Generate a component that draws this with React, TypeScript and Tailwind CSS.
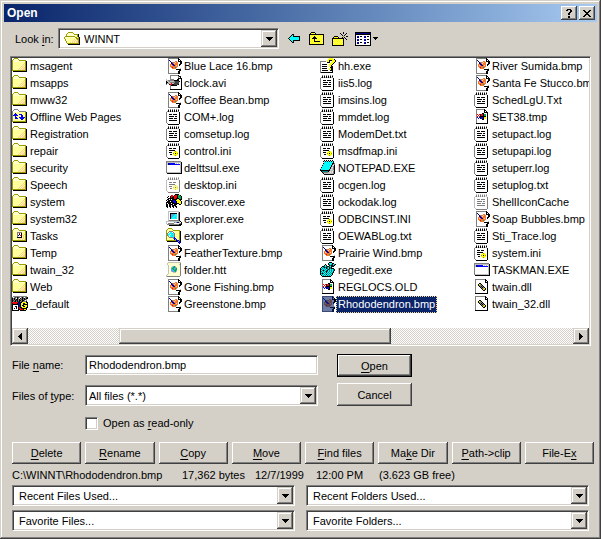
import type { ReactNode } from "react";

const PALETTE: Record<string, string> = {
  k: "#000000",
  w: "#ffffff",
  g: "#808080",
  s: "#c0c0c0",
  l: "#e4e4e0",
  y: "#ffff9c",
  i: "#ffffce",
  z: "#ffff63",
  Y: "#ffff00",
  o: "#9c9c00",
  p: "#ffce9c",
  r: "#ff0000",
  b: "#0000ff",
  n: "#000084",
  c: "#00ffff",
  t: "#008484",
  O: "#f07830",
  G: "#00b050",
  d: "#404040",
  B: "#5aa5e0",
};

const FOLDER = [
  "..oooo..........",
  ".oiiiio.........",
  "oiiiiiiooooooo..",
  "oiiiiiiiiiiiiok.",
  "oiyyyyyyyyyyyok.",
  "oiyyyyyyyyyypok.",
  "oiyyyyyyyyypyok.",
  "oiyyyyyyyypypok.",
  "oiyyyyyyypypyok.",
  "oiyyyyyypypypok.",
  "oiyyyyypypyppok.",
  "oiyyyypypypppok.",
  "ooooooooooooook.",
  ".kkkkkkkkkkkkkk.",
];

const ICONS: Record<string, string[]> = {
  folder: FOLDER,
  offline: [
    "..gggg..........",
    ".gwwwwg.........",
    "gwwwwwwggggggg..",
    "gwyyyyyyyyyyyok.",
    "gyybyyyyyyyyyok.",
    "gybbbyybbbyyyok.",
    "gbbbbbyyybbyyok.",
    "gyybyyyyybbyyok.",
    "gyybbyybbbbbbok.",
    "gyybbbyybbbbyok.",
    "gyyyyyyyybbyyok.",
    "gyyyyyyyyyyyyok.",
    "ooooooooooooook.",
    ".kkkkkkkkkkkkkk.",
  ],
  tasks: [
    "..oooo..........",
    ".oiiiio.........",
    "oiiiiiiooooooo..",
    "oiiiiiiiiiiiiok.",
    "oiyyygggggyyyok.",
    "oiyyygwrwkyyyok.",
    "oiyyygwkwkyypok.",
    "oiyyygbwrkypyok.",
    "oiyyygwwwkypyok.",
    "oiyyykkkkkypyok.",
    "oiyyyyypypypyok.",
    "oiyyyypypypypok.",
    "ooooooooooooook.",
    ".kkkkkkkkkkkkkk.",
  ],
  open: [
    "....ooooo.......",
    "...oiiiiio......",
    "..oiiiiiiiooook.",
    "..oiiiiiiiiiiok.",
    ".ooooooooooyiok.",
    "oiiiiiiiiiiooyok",
    "oiiyyyyyyyyyoook",
    ".oiyyyyyyypypook",
    ".oiyyyyyypypypok",
    "..oyyyyypypyppok",
    "..oyyypypypyppok",
    "...ooooooooooook",
    "....kkkkkkkkkkkk",
  ],
  batch: [
    ".gggggggggggggg.",
    "gwgdgkdgwgkgwgdk",
    "kgkgwkgwkgkdkgkk",
    "kgkgkkgkgdkgkdg.",
    "kdgkdkgkkgkkgwg.",
    "kgdkgkdkgdkgggk.",
    "rrrrrrnnnkYYYYkk",
    "krrrrknnkYYkkYYk",
    "kkkkkkkbnYYkkkkk",
    "kwwwwwkbkYkkYYYk",
    "kwwkkwkbnYYkkYYk",
    "kwwwkwkrkkYYYYkk",
    "kwkwkwkrrnkkkkk.",
    "kwwwwwkkrrrkYYk.",
    "kkkkkkk.kkkkkk..",
  ],
  bmp: [
    "..ggggggggggk...",
    "..gwwwwwwwwwkk..",
    "..gnwwwwwwwwkwk.",
    "..gwnwwwwOOwkkkk",
    "..gwwngOOpOOwwkk",
    "..gwwnbOpOOOwwkk",
    "..gwOOnnOOOOwkk.",
    "..gwOpObnOpOwk..",
    "..gwOOOOOOOOww..",
    "..gwwOrOOGOwww..",
    "..gwwwOOOOwwwws.",
    "..gwwwwwwwkkkkk.",
    "..gwwwwwwwwwwkk.",
    "..gwwwwwwwwwkk..",
    "..gwwwwwwwwwkk..",
    "..ggggggggggkk..",
  ],
  avi: [
    "....ggggggggk...",
    "....gwwwwwwwgkk.",
    "....gwwwwwwwgwk.",
    "....gwwwwwwwkkkk",
    "s...ggggwwwkkwwk",
    "ssggggggkkkkkwwk",
    "kssgssssgddddkwk",
    "kkssgggggddddwwk",
    "ksgssrssdddddwwk",
    "g..krrkkddddkwwk",
    "....gkkkkkkwwwwk",
    "....gwwwwwwwwwwk",
    "....gwwwwwwwwwwk",
    "....gwwwwwwwwwwk",
    "....kkkkkkkkkkkk",
  ],
  log: [
    "..g.g.g.g.g.g...",
    "..kwkwkwkwkwk...",
    ".gksksksksksg...",
    "gwwwwwwwwwwwwk..",
    "gwwwwwwwwwwwwk..",
    "gwwkkkwkkkkwwk..",
    "gwwwwwwwwwwwwk..",
    "gwwkkkkkwkkwwk..",
    "gwwwwwwwwwwwwk..",
    "gwwkkkkwkkkwwk..",
    "gwwwwwwwwwwwwk..",
    "gwwkkkkkkkkwwk..",
    "gwwwwwwwwwwwwk..",
    "gwwwwwwwwwwwwk..",
    ".gwwwwwwwwwwwk..",
    "..kkkkkkkkkkk...",
  ],
  ini: [
    "..g.g.g.g.g.g...",
    "..kwkwkwkwkwk...",
    ".gksksksksksg...",
    "gwwwwwwwwwwwwk..",
    "gwwwwwwwwwwwwk..",
    "gwwkkkwkkkwwwk..",
    "gwwwwwwwwwwwwk..",
    "gwwkkkkkkwwwwk..",
    "gwwwwwwwYoYwwk..",
    "gwwkkkwYYYYYwk..",
    "gwwwwwwoYkYowk..",
    "gwwwkkwYYYYYwk..",
    "gwwwwwwwYoYwwk..",
    "gwwwwwwwwwwwwk..",
    ".gwwwwwwwwwwwk..",
    "..kkkkkkkkkkk...",
  ],
  exe: [
    "................",
    "ggggggggggggggg.",
    "gssssssssssssssk",
    "gsnbbbbbbwswswsk",
    "gsnnbbbbbbbbbbsk",
    "gwwwwwwwwwwwwwsk",
    "gwwwwwwwwwwwwwsk",
    "gwwwwwwwwwwwwwsk",
    "gwwwwwwwwwwwwwsk",
    "gwwwwwwwwwwwwwsk",
    "gwwwwwwwwwwwwwsk",
    "gwwwwwwwwwwwwwsk",
    "gssssssssssssssk",
    ".kkkkkkkkkkkkkkk",
  ],
  discover: [
    ".........kkkk...",
    ".....rr.krrkGGk.",
    "..k.krrkrrrkGGGk",
    ".k..krkkrrrkGGGk",
    "..kkkkkkrrkkkGGk",
    ".kk.kwkkkkkYYkkk",
    "k.kkkkkbbkYYYYk.",
    ".kkkwkkbbbkYYYYk",
    "kkkkkkkkbbkYYYYk",
    "kwkkkwkkkkkkkYYk",
    "kk.kkkkwkkk..kk.",
    "kk.kk.kkkk......",
    "kk.kk.kk.kk.....",
    ".k..k..k..k.....",
  ],
  computer: [
    "..sssssssssss...",
    "..swwwwwwwwwsk..",
    "..swkkkkkkkwgk..",
    "..swkBBBBccwgk..",
    "..swkBBBcccwgk..",
    "..swkBBccccwgk..",
    "..swkBcccBcwgk..",
    "..swkccccccwgk..",
    "..swwwwwwwwwgk..",
    "..sggggggggggk..",
    "ssssssssssssssk.",
    "swwwwwwwgsgnnswk",
    "swggggggwwwwwsgk",
    ".ggggggggggggkkk",
    "...kkkkkkkkkkkk.",
  ],
  search: [
    "..oooo..........",
    ".oyyyyo.........",
    "oyyyyyyooooooo..",
    "oiyggggiyyyyyok.",
    "oigwccwgiyyyyok.",
    "ogwcccBcgyyyyok.",
    "ogccwcccgyyyyok.",
    "ogcwccBcgyyyyok.",
    "oigwccccgyyyyok.",
    "oiyggggBbyyyyok.",
    "oiyyyyygbbyyyok.",
    "oiyyyyyynBbyyok.",
    "oooooooooonbbok.",
    ".kkkkkkkkkknBbk.",
    "............nbn.",
    ".............n..",
  ],
  htt: [
    "..sssssssssssss.",
    ".syyiiiiiiiiiyg.",
    ".siiiiiiiiiiisg.",
    "..siiiiiiiiiiig.",
    "..siiisBGsiiiig.",
    "..siisBGGBsiiig.",
    "..siiBGGBBGiiig.",
    "..siiBBGBGGiiig.",
    "..siiBBBGGBiiig.",
    "..siisBBBGsiiig.",
    "..siiiisssiiiig.",
    "..siiiiiiiiiiig.",
    ".siiiiiiiiiiiig.",
    "syiiiiiiiiiiiig.",
    "sggggggggggggg..",
  ],
  help: [
    ".........YYYY...",
    "........YYYYYYk.",
    ".......YYkkkYYYk",
    "ggggggwYYk..YYYk",
    "gwwwwwwkkk.YYYk.",
    "gwwwwwwww.YYYk..",
    "gwkkkkkwwYYYk...",
    "gwwwwwwwwYYk....",
    "gwkkkkkwwYYkk...",
    "gwwwwwwwwwkkk...",
    "gwkkkkkwwYYkk...",
    "gwwwwwwwwYYkk...",
    "gwkkkkkkwwkkk...",
    "gwwwwwwwwwwwk...",
    "gkkkkkkkkkkkk...",
  ],
  notepad: [
    "....k.k.k.k.k...",
    "...kckckckckck..",
    "....ccccccccck..",
    "...kcccccccckkg.",
    "...cccccccccksg.",
    "..kcccccccckslk.",
    "..cccccccccksgk.",
    ".kcccccccckslgk.",
    ".ccccccccckssgk.",
    "kcccccccckslsgk.",
    "kkkkkkkkkkssssk.",
    ".kttttttkslslgk.",
    "..kgggggsslslgk.",
    "...ksssssssssgk.",
    "....kkkkkkkkkk..",
  ],
  regedit: [
    ".........kkk....",
    "........kccckk..",
    ".....k..ktctkctk",
    "....kck..ktkktk.",
    "..kktctkktckkk..",
    ".kctktktcktk....",
    "kctctcktcktkkk..",
    "ktctctctktctctk.",
    "kctktctkctctctk.",
    "ktctctktctctck..",
    "kctctckctctctk..",
    "ktktctctctctk...",
    "kctctckctctck...",
    ".kctctctctck....",
    "..kkkkkkkkk.....",
  ],
  windoc: [
    "..ggggggggk.....",
    "..gwwwwwwwkk....",
    "..gwwwwwwwkwk...",
    "..gwwwwwwwkkkk..",
    "..gwwwwwkkwwwk..",
    "..grwrkrrkGGwk..",
    "..gwrwkrrkGGwk..",
    "..grwrkkkkkkwk..",
    "..gbwbkbbkYYwk..",
    "..gwbwkbbkYYwk..",
    "..gwwwwwkkwwwk..",
    "..gwwwwwwwwwwk..",
    "..gwwwwwwwwwwk..",
    "..gwwwwwwwwwwk..",
    "..kkkkkkkkkkkk..",
  ],
  dll: [
    ".ggggggggggk....",
    ".gwwwwwwwwwkk...",
    ".gwwwwwwwwwkwk..",
    ".gwwwwwwwwwkkk..",
    ".gwwwkkwwwwwwk..",
    ".gwwkYokwwwwwk..",
    ".gwwkoggkwwwwk..",
    ".gwwwkgkgkwwwk..",
    ".gwwwwkgkgkwwk..",
    ".gwwwwwkgoYkwk..",
    ".gwwwwwwkYokwk..",
    ".gwwwwwwwkkwwk..",
    ".gwwwwwwwwwwwk..",
    ".gwwwwwwwwwwwk..",
    ".kkkkkkkkkkkkk..",
  ],
  back: [
    "....kk......",
    "...kck......",
    "..kcckkkkkkk",
    ".kccccccccck",
    "kcccccccccck",
    ".kccccccccck",
    "..kcckkkkkkk",
    "...kck......",
    "....kk......",
  ],
  up: [
    "..kkkk.........",
    ".kYzYzk........",
    "kkkkkkkkkkkkkkk",
    "kYzYzYzYzYzYzYk",
    "kzYzYkYzYzYzYzk",
    "kYzYkkkYzYzYzYk",
    "kzYkkkkkYzYzYzk",
    "kYzYzkzYzYzYzYk",
    "kzYzYkYzYzYzYzk",
    "kYzYzkkkkkkYzYk",
    "kzYzYzYzYzYzYzk",
    "kYzYzYzYzYzYzYk",
    "kkkkkkkkkkkkkkk",
  ],
  create: [
    "...........k....",
    "........k..k..k.",
    ".........k...k..",
    "..........k.k...",
    "..kkkk.....o..kk",
    ".kYYYYk...k.k...",
    "kkkkkkkkkkkk.k..",
    "kYzYzYzYzYzk..k.",
    "kzYzYzYzYzYk....",
    "kYzYzYzYzYzk....",
    "kzYzYzYzYzYk....",
    "kYzYzYzYzYzk....",
    "kzYzYzYzYzYk....",
    "kkkkkkkkkkkk....",
  ],
  views: [
    "kkkkkkkkkkkkkkkk",
    "knnnnnnnnnnnnnnk",
    "kkkkkkkkkkkkkkkk",
    "kwwwwwwwwwwwwwwk",
    "kwbnwkkwwbnwkkwk",
    "kwnnwwwwwnnwwwwk",
    "kwwwwwwwwwwwwwwk",
    "kwbnwkkwwbnwkkwk",
    "kwnnwwwwwnnwwwwk",
    "kwwwwwwwwwwwwwwk",
    "kwbnwkkwwbnwkkwk",
    "kwnnwwwwwnnwwwwk",
    "kwwwwwwwwwwwwwwk",
    "kkkkkkkkkkkkkkkk",
  ],
  down: ["kkkkkkk", ".kkkkk.", "..kkk..", "...k..."],
  caret: ["kkkkk", ".kkk.", "..k.."],
  left: ["...k", "..kk", ".kkk", "kkkk", ".kkk", "..kk", "...k"],
  right: ["k...", "kk..", "kkk.", "kkkk", "kkk.", "kk..", "k..."],
  close: ["kk....kk", ".kk..kk.", "..kkkk..", "...kk...", "..kkkk..", ".kk..kk.", "kk....kk"],
  question: [".kkkk.", "kk..kk", "....kk", "...kk.", "..kk..", "..kk..", "......", "..kk..", "..kk.."],
};

function Pixels({ name, className = "" }: { name: string; className?: string }) {
  const rows = ICONS[name];
  const width = Math.max(...rows.map((r) => r.length));
  const rects: ReactNode[] = [];
  rows.forEach((row, y) => {
    let x = 0;
    while (x < row.length) {
      let end = x + 1;
      while (end < row.length && row[end] === row[x]) end++;
      const fill = PALETTE[row[x]];
      if (fill) rects.push(<rect key={`${x}-${y}`} x={x} y={y} width={end - x} height={1} fill={fill} />);
      x = end;
    }
  });
  return (
    <svg
      aria-hidden="true"
      width={width}
      height={rows.length}
      viewBox={`0 0 ${width} ${rows.length}`}
      shapeRendering="crispEdges"
      className={`block shrink-0 ${className}`}
    >
      {rects}
    </svg>
  );
}

const RAISED =
  "bg-[#d4d0c8] shadow-[inset_-1px_-1px_0_#404040,inset_1px_1px_0_#fff,inset_-2px_-2px_0_#808080]";
const THUMB =
  "bg-[#d4d0c8] shadow-[inset_-1px_-1px_0_#404040,inset_1px_1px_0_#d4d0c8,inset_-2px_-2px_0_#808080,inset_2px_2px_0_#fff]";
const SUNKEN =
  "border border-t-[#808080] border-l-[#808080] border-r-white border-b-white bg-white shadow-[inset_1px_1px_0_#404040,inset_-1px_-1px_0_#d4d0c8]";

type Entry = { icon: string; name: string; selected?: boolean; faded?: boolean };

const e = (icon: string, name: string, extra: Partial<Entry> = {}): Entry => ({ icon, name, ...extra });

const COLUMNS: Entry[][] = [
  [
    e("folder", "msagent"),
    e("folder", "msapps"),
    e("folder", "mww32"),
    e("offline", "Offline Web Pages"),
    e("folder", "Registration"),
    e("folder", "repair"),
    e("folder", "security"),
    e("folder", "Speech"),
    e("folder", "system"),
    e("folder", "system32"),
    e("tasks", "Tasks"),
    e("folder", "Temp"),
    e("folder", "twain_32"),
    e("folder", "Web"),
    e("batch", "_default"),
  ],
  [
    e("bmp", "Blue Lace 16.bmp"),
    e("avi", "clock.avi"),
    e("bmp", "Coffee Bean.bmp"),
    e("log", "COM+.log"),
    e("log", "comsetup.log"),
    e("ini", "control.ini"),
    e("exe", "delttsul.exe"),
    e("ini", "desktop.ini", { faded: true }),
    e("discover", "discover.exe"),
    e("computer", "explorer.exe"),
    e("search", "explorer"),
    e("bmp", "FeatherTexture.bmp"),
    e("htt", "folder.htt"),
    e("bmp", "Gone Fishing.bmp"),
    e("bmp", "Greenstone.bmp"),
  ],
  [
    e("help", "hh.exe"),
    e("log", "iis5.log"),
    e("log", "imsins.log"),
    e("log", "mmdet.log"),
    e("log", "ModemDet.txt"),
    e("ini", "msdfmap.ini"),
    e("notepad", "NOTEPAD.EXE"),
    e("log", "ocgen.log"),
    e("log", "ockodak.log"),
    e("ini", "ODBCINST.INI"),
    e("log", "OEWABLog.txt"),
    e("bmp", "Prairie Wind.bmp"),
    e("regedit", "regedit.exe"),
    e("windoc", "REGLOCS.OLD"),
    e("bmp", "Rhododendron.bmp", { selected: true }),
  ],
  [
    e("bmp", "River Sumida.bmp"),
    e("bmp", "Santa Fe Stucco.bmp"),
    e("log", "SchedLgU.Txt"),
    e("windoc", "SET38.tmp"),
    e("log", "setupact.log"),
    e("log", "setupapi.log"),
    e("log", "setuperr.log"),
    e("log", "setuplog.txt"),
    e("log", "ShellIconCache", { faded: true }),
    e("bmp", "Soap Bubbles.bmp"),
    e("log", "Sti_Trace.log"),
    e("ini", "system.ini"),
    e("exe", "TASKMAN.EXE"),
    e("dll", "twain.dll"),
    e("dll", "twain_32.dll"),
  ],
];

function FileRow({ entry }: { entry: Entry }) {
  return (
    <li role="option" aria-selected={!!entry.selected} className="flex h-[17px] whitespace-nowrap">
      <span className={`relative h-4 w-4 shrink-0 ${entry.faded ? "opacity-50" : ""}`}>
        <Pixels name={entry.icon} />
        {entry.selected && <span className="absolute inset-y-0 right-0.5 left-0.5 bg-[#0a246a]/60" />}
      </span>
      <span
        className={`border border-dotted px-px leading-[15px] ${
          entry.selected ? "border-[#f5db95] bg-[#0a246a] text-white" : "border-transparent"
        }`}
      >
        {entry.name}
      </span>
    </li>
  );
}

function Combo({ id, label, value, className = "" }: { id: string; label?: string; value: string; className?: string }) {
  return (
    <div className={`relative h-[21px] ${SUNKEN} ${className}`}>
      <select
        id={id}
        aria-label={label}
        className="block h-full w-full appearance-none bg-transparent pr-5 outline-none"
      >
        <option>{value}</option>
      </select>
      <span
        className={`pointer-events-none absolute top-px right-px bottom-px flex w-4 items-center justify-center ${THUMB}`}
      >
        <Pixels name="down" />
      </span>
    </div>
  );
}

function Key({ text, at }: { text: string; at: number }) {
  return (
    <span>
      {text.slice(0, at)}
      <u className="underline-offset-2">{text[at]}</u>
      {text.slice(at + 1)}
    </span>
  );
}

const COMMANDS: [string, number][] = [
  ["Delete", 0],
  ["Rename", 0],
  ["Copy", 0],
  ["Move", 0],
  ["Find files", 0],
  ["Make Dir", 2],
  ["Path->clip", 0],
  ["File-Ex", 6],
];

const TRACK = "bg-[repeating-conic-gradient(#fff_0_25%,#d4d0c8_0_50%)] bg-size-[2px_2px]";

export default function App() {
  return (
    <main className="min-h-screen bg-[#d4d0c8] p-1 font-['Liberation_Sans',Arial,sans-serif] text-[11px] leading-[14px] text-black shadow-[inset_-1px_-1px_0_#404040,inset_1px_1px_0_#d4d0c8,inset_-2px_-2px_0_#808080,inset_2px_2px_0_#fff]">
      <header className="flex h-[18px] items-center bg-linear-to-r from-[#0a246a] to-[#a6caf0] pr-0.5 pl-[3px]">
        <h1 className="flex-1 text-xs font-bold text-white">Open</h1>
        <button aria-label="Help" className={`mr-0.5 flex h-3.5 w-4 items-center justify-center ${RAISED}`}>
          <Pixels name="question" />
        </button>
        <button aria-label="Close" className={`flex h-3.5 w-4 items-center justify-center ${RAISED}`}>
          <Pixels name="close" />
        </button>
      </header>

      <div className="flex items-center pt-1.5 pl-[11px]">
        <label htmlFor="look-in" className="w-[43px]">
          <Key text="Look in:" at={5} />
        </label>
        <div className="relative w-[221px]">
          <Combo id="look-in" value="WINNT" className="pl-[25px]" />
          <Pixels name="open" className="pointer-events-none absolute top-1 left-1.5" />
        </div>
        <button aria-label="Back" className="ml-[9px]">
          <Pixels name="back" />
        </button>
        <button aria-label="Up one level" className="ml-[9px]">
          <Pixels name="up" />
        </button>
        <button aria-label="Create new folder" className="ml-2">
          <Pixels name="create" />
        </button>
        <button aria-label="View menu" className="ml-[7px] flex items-center gap-0.5">
          <Pixels name="views" />
          <Pixels name="caret" />
        </button>
      </div>

      <section className={`mt-[7px] mr-1.5 ml-1.5 p-px ${SUNKEN}`}>
        <ul
          role="listbox"
          aria-label="Files"
          className="grid h-[270px] grid-cols-[154px_154px_154px_minmax(0,1fr)] overflow-hidden"
        >
          {COLUMNS.map((column, i) => (
            <li key={i} role="presentation">
              <ul role="group">
                {column.map((entry) => (
                  <FileRow key={entry.name} entry={entry} />
                ))}
              </ul>
            </li>
          ))}
        </ul>
        <div className="flex h-4">
          <button aria-label="Scroll left" className={`flex w-4 items-center justify-center ${THUMB}`}>
            <Pixels name="left" />
          </button>
          <div className={`flex flex-1 ${TRACK}`}>
            <div className="w-1/6" />
            <div className={`w-1/2 ${THUMB}`} />
          </div>
          <button aria-label="Scroll right" className={`flex w-4 items-center justify-center ${THUMB}`}>
            <Pixels name="right" />
          </button>
        </div>
      </section>

      <form className="pr-[3px] pl-2" onSubmit={(event) => event.preventDefault()}>
        <div className="flex pt-2">
          <div className="w-[306px] pt-px">
            <div className="flex items-center">
              <label htmlFor="file-name" className="w-[73px]">
                <Key text="File name:" at={5} />
              </label>
              <input
                id="file-name"
                defaultValue="Rhododendron.bmp"
                className={`h-5 w-[233px] px-[3px] outline-none ${SUNKEN}`}
              />
            </div>
            <div className="mt-2.5 flex items-center">
              <label htmlFor="file-type" className="w-[73px]">
                <Key text="Files of type:" at={9} />
              </label>
              <Combo id="file-type" value="All files (*.*)" className="w-[233px] pl-[3px]" />
            </div>
          </div>
          <div className="ml-[19px] flex w-[75px] flex-col gap-1.5">
            <button
              type="submit"
              className="h-[23px] border border-black bg-[#d4d0c8] shadow-[inset_-1px_-1px_0_#404040,inset_1px_1px_0_#fff,inset_-2px_-2px_0_#808080]"
            >
              <Key text="Open" at={0} />
            </button>
            <button type="button" className={`h-[23px] ${RAISED}`}>
              Cancel
            </button>
          </div>
        </div>

        <label className="mt-2.5 ml-[73px] flex w-fit items-center gap-[5px]">
          <input type="checkbox" className={`h-[13px] w-[13px] appearance-none ${SUNKEN}`} />
          <Key text="Open as read-only" at={8} />
        </label>

        <div className="mt-3 grid grid-cols-8 gap-1">
          {COMMANDS.map(([text, at]) => (
            <button key={text} type="button" className={`h-[22px] ${RAISED}`}>
              <Key text={text} at={at} />
            </button>
          ))}
        </div>

        <p className="flex h-[21px] items-center whitespace-nowrap">
          <span className="w-[170px]">C:\WINNT\Rhododendron.bmp</span>
          <span className="w-[73px]">17,362 bytes</span>
          <span className="w-[61px]">12/7/1999</span>
          <span className="w-[63px]">12:00 PM</span>
          <span>(3.623 GB free)</span>
        </p>

        <div className="mr-[5px] grid grid-cols-2 gap-x-[11px] gap-y-1 pb-1">
          <Combo id="recent-files" label="Recent files" value="Recent Files Used..." className="pl-1.5" />
          <Combo id="recent-folders" label="Recent folders" value="Recent Folders Used..." className="pl-1.5" />
          <Combo id="favorite-files" label="Favorite files" value="Favorite Files..." className="pl-1.5" />
          <Combo id="favorite-folders" label="Favorite folders" value="Favorite Folders..." className="pl-1.5" />
        </div>
      </form>
    </main>
  );
}
